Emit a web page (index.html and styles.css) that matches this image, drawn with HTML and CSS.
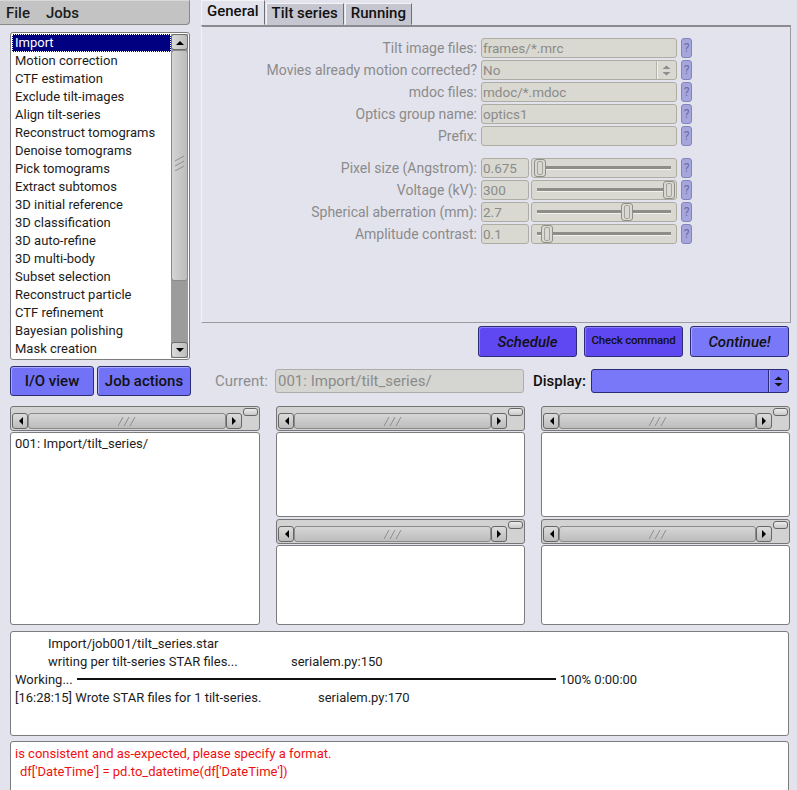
FILE: index.html
```html
<!DOCTYPE html>
<html lang="en">
<head>
    <meta charset="UTF-8">
    <title>RELION</title>
    <link rel="stylesheet" href="styles.css">
</head>
<body>
<div class="top">
    <div class="side">
        <div class="menubar"><span>File</span><span>Jobs</span></div>
        <div class="joblist">
            <div class="items">
                <div class="item sel">Import</div>
                <div class="item">Motion correction</div>
                <div class="item">CTF estimation</div>
                <div class="item">Exclude tilt-images</div>
                <div class="item">Align tilt-series</div>
                <div class="item">Reconstruct tomograms</div>
                <div class="item">Denoise tomograms</div>
                <div class="item">Pick tomograms</div>
                <div class="item">Extract subtomos</div>
                <div class="item">3D initial reference</div>
                <div class="item">3D classification</div>
                <div class="item">3D auto-refine</div>
                <div class="item">3D multi-body</div>
                <div class="item">Subset selection</div>
                <div class="item">Reconstruct particle</div>
                <div class="item">CTF refinement</div>
                <div class="item">Bayesian polishing</div>
                <div class="item">Mask creation</div>
            </div>
            <div class="vscroll">
                <div class="vbtn"><svg width="8" height="5" viewBox="0 0 8 5"><path d="M0 5 L4 1 L8 5 Z"/></svg></div>
                <div class="vthumb"><svg width="9" height="16" viewBox="0 0 9 16"><path d="M0 6 L9 1 M0 11 L9 6 M0 16 L9 11"/></svg></div>
                <div class="vtrack"></div>
                <div class="vbtn"><svg width="8" height="5" viewBox="0 0 8 5"><path d="M0 0 L4 4 L8 0 Z"/></svg></div>
            </div>
        </div>
    </div>
    <div class="main">
        <div class="tabs">
            <div class="tab on">General</div>
            <div class="tab">Tilt series</div>
            <div class="tab">Running</div>
        </div>
        <div class="panel">
            <div class="row"><label>Tilt image files:</label><div class="field">frames/*.mrc</div><span class="help">?</span></div>
            <div class="row"><label>Movies already motion corrected?</label>
                <div class="field choice"><span class="val">No</span>
                    <span class="spin"><svg width="9" height="11" viewBox="0 0 9 11"><path d="M0.5 4 L4.5 0.5 L8.5 4 Z M0.5 7 L4.5 10.5 L8.5 7 Z"/></svg></span>
                </div><span class="help">?</span></div>
            <div class="row"><label>mdoc files:</label><div class="field">mdoc/*.mdoc</div><span class="help">?</span></div>
            <div class="row"><label>Optics group name:</label><div class="field">optics1</div><span class="help">?</span></div>
            <div class="row"><label>Prefix:</label><div class="field"></div><span class="help">?</span></div>
            <div class="row gap"><label>Pixel size (Angstrom):</label>
                <div class="pair"><div class="field">0.675</div><div class="slider"><div class="knob" style="left: 2px"></div></div></div><span class="help">?</span></div>
            <div class="row"><label>Voltage (kV):</label>
                <div class="pair"><div class="field">300</div><div class="slider"><div class="knob" style="left: 131px"></div></div></div><span class="help">?</span></div>
            <div class="row"><label>Spherical aberration (mm):</label>
                <div class="pair"><div class="field">2.7</div><div class="slider"><div class="knob" style="left: 89px"></div></div></div><span class="help">?</span></div>
            <div class="row"><label>Amplitude contrast:</label>
                <div class="pair"><div class="field">0.1</div><div class="slider"><div class="knob" style="left: 9px"></div></div></div><span class="help">?</span></div>
        </div>
        <div class="runbtns">
            <div class="btn dark big">Schedule</div>
            <div class="btn dark small">Check command</div>
            <div class="btn big">Continue!</div>
        </div>
    </div>
</div>
<div class="bar">
    <div class="btn view io">I/O view</div>
    <div class="btn view actions">Job actions</div>
    <span class="cur-label">Current:</span>
    <div class="field current">001: Import/tilt_series/</div>
    <span class="disp-label">Display:</span>
    <div class="display">
        <span class="val"></span>
        <span class="spin"><svg width="9" height="11" viewBox="0 0 9 11"><path d="M0.5 4 L4.5 0.5 L8.5 4 Z M0.5 7 L4.5 10.5 L8.5 7 Z"/></svg></span>
    </div>
</div>
<div class="browsers">
    <div class="col">
        <div class="hframe">
            <div class="hscroll">
                <div class="hbtn"><svg width="5" height="8" viewBox="0 0 5 8"><path d="M5 0 L1 4 L5 8 Z"/></svg></div>
                <div class="hthumb"><svg width="18" height="9" viewBox="0 0 18 9"><path d="M0 9 L5 0 M6 9 L11 0 M12 9 L17 0"/></svg></div>
                <div class="hbtn"><svg width="5" height="8" viewBox="0 0 5 8"><path d="M0 0 L4 4 L0 8 Z"/></svg></div>
            </div>
            <div class="pill"></div>
        </div>
        <div class="list">001: Import/tilt_series/</div>
    </div>
    <div class="col">
        <div class="hframe">
            <div class="hscroll">
                <div class="hbtn"><svg width="5" height="8" viewBox="0 0 5 8"><path d="M5 0 L1 4 L5 8 Z"/></svg></div>
                <div class="hthumb"><svg width="18" height="9" viewBox="0 0 18 9"><path d="M0 9 L5 0 M6 9 L11 0 M12 9 L17 0"/></svg></div>
                <div class="hbtn"><svg width="5" height="8" viewBox="0 0 5 8"><path d="M0 0 L4 4 L0 8 Z"/></svg></div>
            </div>
            <div class="pill"></div>
        </div>
        <div class="list half-top"></div>
        <div class="hframe">
            <div class="hscroll">
                <div class="hbtn"><svg width="5" height="8" viewBox="0 0 5 8"><path d="M5 0 L1 4 L5 8 Z"/></svg></div>
                <div class="hthumb"><svg width="18" height="9" viewBox="0 0 18 9"><path d="M0 9 L5 0 M6 9 L11 0 M12 9 L17 0"/></svg></div>
                <div class="hbtn"><svg width="5" height="8" viewBox="0 0 5 8"><path d="M0 0 L4 4 L0 8 Z"/></svg></div>
            </div>
            <div class="pill"></div>
        </div>
        <div class="list"></div>
    </div>
    <div class="col">
        <div class="hframe">
            <div class="hscroll">
                <div class="hbtn"><svg width="5" height="8" viewBox="0 0 5 8"><path d="M5 0 L1 4 L5 8 Z"/></svg></div>
                <div class="hthumb"><svg width="18" height="9" viewBox="0 0 18 9"><path d="M0 9 L5 0 M6 9 L11 0 M12 9 L17 0"/></svg></div>
                <div class="hbtn"><svg width="5" height="8" viewBox="0 0 5 8"><path d="M0 0 L4 4 L0 8 Z"/></svg></div>
            </div>
            <div class="pill"></div>
        </div>
        <div class="list half-top"></div>
        <div class="hframe">
            <div class="hscroll">
                <div class="hbtn"><svg width="5" height="8" viewBox="0 0 5 8"><path d="M5 0 L1 4 L5 8 Z"/></svg></div>
                <div class="hthumb"><svg width="18" height="9" viewBox="0 0 18 9"><path d="M0 9 L5 0 M6 9 L11 0 M12 9 L17 0"/></svg></div>
                <div class="hbtn"><svg width="5" height="8" viewBox="0 0 5 8"><path d="M0 0 L4 4 L0 8 Z"/></svg></div>
            </div>
            <div class="pill"></div>
        </div>
        <div class="list"></div>
    </div>
</div>
<div class="log">
    <div class="ln indent">Import/job001/tilt_series.star</div>
    <div class="ln indent"><span class="msg m1">writing per tilt-series STAR files...</span><span>serialem.py:150</span></div>
    <div class="ln"><span>Working...</span><span class="prog"></span><span>100% 0:00:00</span></div>
    <div class="ln"><span class="msg m2">[16:28:15] Wrote STAR files for 1 tilt-series.</span><span>serialem.py:170</span></div>
</div>
<div class="err">
    <div class="ln">is consistent and as-expected, please specify a format.</div>
    <div class="ln sub">df['DateTime'] = pd.to_datetime(df['DateTime'])</div>
</div>
</body>
</html>
```
FILE: styles.css
```css
* {
    box-sizing: border-box;
}
html, body {
    margin: 0;
}
body {
    width: 797px;
    height: 790px;
    overflow: hidden;
    background: #e3e3ed;
    font-family: Roboto, "Liberation Sans", sans-serif;
    font-size: 13px;
    color: #1c1c1c;
}
svg {
    display: block;
}
.top {
    display: flex;
    height: 360px;
}
.side {
    width: 190px;
    display: flex;
    flex-direction: column;
}
.menubar {
    height: 25px;
    display: flex;
    align-items: center;
    gap: 16px;
    padding-left: 6px;
    background: #c3c3c3;
    border: 1px solid #8a8a8a;
    border-top-color: #d8d8d8;
    border-left: 0;
    border-radius: 0 0 4px 0;
    font-size: 15px;
    font-weight: 500;
}
.joblist {
    display: flex;
    height: 328px;
    margin: 7px 0 0 10px;
    padding: 1px;
    background: #fff;
    border: 1px solid #7c7c7c;
    border-radius: 3px;
}
.items {
    flex: 1;
}
.item {
    height: 18px;
    line-height: 18px;
    padding-left: 3px;
    white-space: nowrap;
}
.item.sel {
    background: #000080;
    color: #fff;
    outline: 1px dotted #fff;
    outline-offset: -1px;
}
.vscroll {
    width: 17px;
    display: flex;
    flex-direction: column;
    background: #9c9c9c;
}
.vbtn {
    height: 16px;
    display: flex;
    align-items: center;
    justify-content: center;
    background: linear-gradient(90deg, #dadada, #bdbdbd);
    border: 1px solid #6c6c6c;
    border-radius: 3px;
}
.vthumb {
    height: 231px;
    display: flex;
    align-items: center;
    justify-content: center;
    padding-bottom: 6px;
    background: linear-gradient(90deg, #d4d4d4, #bcbcbc);
    border: 1px solid #8a8a8a;
    border-radius: 3px;
}
.vthumb svg path, .hthumb svg path {
    stroke: #8e8e8e;
    stroke-width: 1;
    fill: none;
}
.vtrack {
    flex: 1;
}
.main {
    width: 590px;
    margin-left: 11px;
    display: flex;
    flex-direction: column;
}
.tabs {
    display: flex;
    align-items: flex-end;
    gap: 1px;
    height: 25px;
}
.tab {
    height: 22px;
    line-height: 19px;
    padding: 0 5px;
    background: #c6c6d0;
    border: 1px solid;
    border-color: #f4f4f8 #6e6e78 transparent #f4f4f8;
    font-size: 15px;
    font-weight: 500;
    color: #111;
}
.tab.on {
    height: 25px;
    line-height: 21px;
    background: #e3e3ed;
}
.panel {
    height: 298px;
    padding-top: 11px;
    border-top: 2px solid #8a8a90;
    border-right: 1px solid #9a9aa0;
    border-bottom: 1px solid #9a9aa0;
    border-left: 1px solid #f4f4f8;
    display: flex;
    flex-direction: column;
    gap: 2px;
}
.row {
    display: grid;
    grid-template-columns: 1fr 196px 11px;
    column-gap: 4px;
    height: 20px;
    padding-right: 98px;
    align-items: center;
}
.row.gap {
    margin-top: 10px;
}
.row label {
    text-align: right;
    font-size: 14px;
    color: #8b8b8b;
    white-space: nowrap;
}
.field {
    height: 20px;
    line-height: 18px;
    padding-left: 1px;
    font-size: 13.5px;
    background: #d9d9d1;
    border: 1px solid #adada3;
    border-radius: 3px;
    color: #8b8b8b;
    white-space: nowrap;
    overflow: hidden;
}
.choice {
    display: flex;
    padding-right: 0;
}
.choice .val {
    flex: 1;
}
.spin {
    width: 20px;
    display: flex;
    align-items: center;
    justify-content: center;
    border-left: 1px solid #b3b3aa;
    box-shadow: inset 1px 0 0 #f2f2ec;
}
.choice .spin path {
    fill: #8d8d8d;
}
.help {
    height: 20px;
    line-height: 18px;
    text-align: center;
    background: #a6a6dc;
    border: 1px solid #8484bc;
    border-radius: 3px;
    color: #6c6ca6;
    font-size: 12px;
}
.pair {
    display: grid;
    grid-template-columns: 48px 1fr;
    column-gap: 2px;
}
.slider {
    position: relative;
    height: 20px;
    background: #d9d9d1;
    border: 1px solid #adada3;
    border-radius: 3px;
}
.slider::before {
    content: "";
    position: absolute;
    left: 5px;
    right: 5px;
    top: 7px;
    height: 3px;
    background: #8e8e88;
    border-bottom: 1px solid #f2f2ec;
}
.knob {
    position: absolute;
    top: 0;
    width: 12px;
    height: 18px;
    background: #d9d9d1;
    border: 1px solid #8f8f88;
    border-radius: 3px;
}
.knob::after {
    content: "";
    position: absolute;
    left: 2px;
    right: 2px;
    top: 1px;
    bottom: 1px;
    border: 1px solid #a3a39b;
    border-radius: 2px;
}
.runbtns {
    display: flex;
    justify-content: flex-end;
    margin-top: 3px;
    padding-right: 2px;
    gap: 7px;
}
.btn {
    height: 31px;
    display: flex;
    align-items: center;
    justify-content: center;
    background: #7878f8;
    border: 1px solid #2c2c74;
    border-radius: 3px;
    box-shadow: inset 1px 1px 0 #a8a8ff;
    color: #111;
    font-size: 15px;
    font-weight: 500;
}
.btn.dark {
    background: #5f48f2;
    box-shadow: inset 1px 1px 0 #8c7cff;
}
.btn.big {
    width: 99px;
    font-style: italic;
}
.btn.small {
    width: 99px;
    font-size: 11.5px;
    letter-spacing: -0.2px;
    padding-bottom: 3px;
}
.bar {
    display: flex;
    align-items: center;
    height: 30px;
    margin-top: 6px;
    padding-left: 10px;
}
.btn.view {
    height: 30px;
    background: #7272f6;
}
.btn.io {
    width: 84px;
}
.btn.actions {
    width: 94px;
    margin-left: 3px;
}
.cur-label {
    width: 60px;
    margin-left: 24px;
    font-size: 15px;
    color: #8d8d8d;
}
.field.current {
    width: 249px;
    height: 24px;
    line-height: 22px;
    padding-left: 2px;
    font-size: 15px;
    background: #d5d5d1;
    border-color: #acaca8;
}
.disp-label {
    width: 58px;
    margin-left: 9px;
    font-size: 15px;
    font-weight: 500;
    color: #111;
}
.display {
    width: 198px;
    height: 24px;
    display: flex;
    background: #7878f8;
    border: 1px solid #2c2c74;
    border-radius: 3px;
}
.display .val {
    flex: 1;
}
.display .spin {
    border-left-color: #2c2c74;
    box-shadow: inset 1px 0 0 #a8a8ff;
}
.display .spin path {
    fill: #111;
}
.browsers {
    display: grid;
    grid-template-columns: 250px 249px 249px;
    column-gap: 16px;
    height: 219px;
    margin-top: 10px;
    padding-left: 10px;
}
.col {
    display: flex;
    flex-direction: column;
    gap: 1px;
}
.hframe {
    display: flex;
    gap: 1px;
    height: 25px;
    padding: 1px;
    background: #d2d2d2;
    border: 1px solid #767676;
    border-radius: 3px;
}
.hscroll {
    flex: 1;
    display: flex;
    height: 16px;
    align-self: flex-end;
}
.hbtn {
    width: 16px;
    display: flex;
    align-items: center;
    justify-content: center;
    background: linear-gradient(#dcdcdc, #bcbcbc);
    border: 1px solid #666;
    border-radius: 3px;
}
.hthumb {
    flex: 1;
    display: flex;
    align-items: center;
    justify-content: center;
    background: linear-gradient(#d6d6d6, #bdbdbd);
    border: 1px solid #8a8a8a;
    border-radius: 3px;
}
.pill {
    width: 15px;
    height: 8px;
    background: linear-gradient(#ececec, #c8c8c8);
    border: 1px solid #666;
    border-radius: 3px;
}
.list {
    flex: 1;
    padding: 3px 4px;
    background: #fff;
    border: 1px solid #7c7c7c;
    border-radius: 3px;
    line-height: 16px;
}
.list.half-top {
    flex: 0 0 85px;
    margin-bottom: 1px;
}
.log {
    width: 779px;
    height: 105px;
    margin: 6px 0 0 10px;
    padding: 2px 4px;
    background: #fff;
    border: 1px solid #7c7c7c;
    border-radius: 3px;
}
.ln {
    display: flex;
    align-items: center;
    height: 18px;
    white-space: nowrap;
}
.ln.indent {
    padding-left: 33px;
}
.msg.m1 {
    width: 243px;
}
.msg.m2 {
    width: 303px;
}
.prog {
    width: 479px;
    height: 2px;
    margin: 0 4px;
    background: #111;
}
.err {
    width: 779px;
    height: 60px;
    margin: 5px 0 0 10px;
    padding: 2px 4px;
    background: #fff;
    border: 1px solid #7c7c7c;
    border-radius: 3px;
    color: #f01010;
}
.err .sub {
    padding-left: 5px;
}
```
